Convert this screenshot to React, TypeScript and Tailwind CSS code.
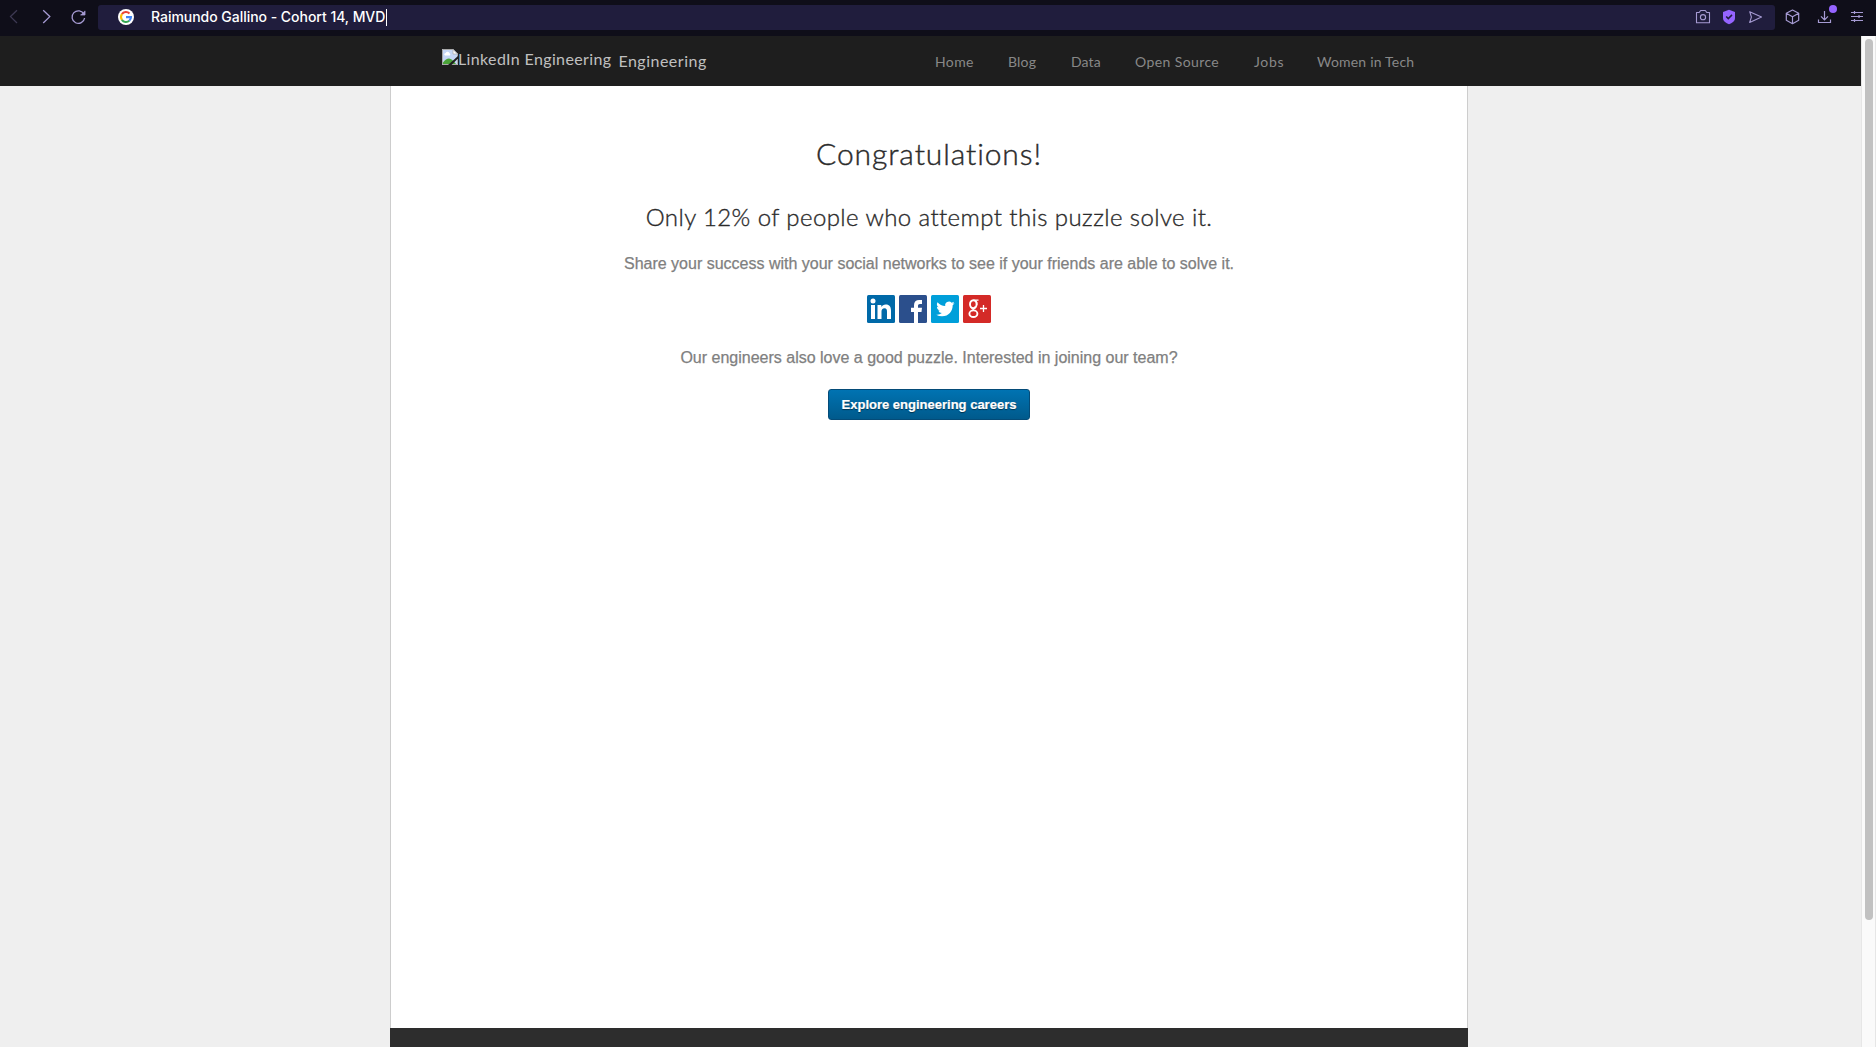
import React from "react";

const navItems = [
  { label: "Home", size: "w-[73px] tracking-[0.4px]" },
  { label: "Blog", size: "w-[63px] tracking-[0.2px]" },
  { label: "Data", size: "w-[64px] tracking-[0.1px]" },
  { label: "Open Source", size: "w-[119px] tracking-[0.4px]" },
  { label: "Jobs", size: "w-[63px] tracking-[0.7px]" },
  { label: "Women in Tech", size: "w-[99px] tracking-[0.2px]" },
];

function GoogleLogo() {
  return (
    <svg width="16" height="16" viewBox="0 0 16 16" className="shrink-0">
      <circle cx="8" cy="8" r="8" fill="#fff" />
      <g fill="none" strokeWidth="2.1">
        <path d="M3.9 5.2A5 5 0 0 1 11.5 4.4" stroke="#ea4335" />
        <path d="M3.9 10.8A5 5 0 0 1 3.9 5.2" stroke="#fbbc05" />
        <path d="M11.3 11.8A5 5 0 0 1 3.9 10.8" stroke="#34a853" />
        <path d="M8 8.1h5A5 5 0 0 1 11.3 11.8" stroke="#4285f4" />
      </g>
    </svg>
  );
}

function BrowserBar() {
  return (
    <div className="flex h-9 shrink-0 items-start bg-[#0f0e19] pt-[5px]">
      <div className="flex h-[25px] w-[98px] shrink-0 items-center">
        <svg width="98" height="25" viewBox="0 0 98 25" fill="none" strokeWidth="1.3">
          <path d="M17 5.2 10.5 11.6 17 18" stroke="#3d3953" />
          <path d="M43.2 5.2 49.8 11.6 43.2 18" stroke="#a69bd3" />
          <path d="M84 9.3A6.3 6.3 0 1 0 84.6 13" stroke="#a69bd3" />
          <path d="M85 5.8V10h-4.6" fill="#a69bd3" stroke="#a69bd3" strokeWidth="0.8" />
        </svg>
      </div>
      <div className="flex h-[25px] w-[1677px] shrink-0 items-center rounded-[3px] bg-[#201d3d] pl-5">
        <div className="-mt-px flex items-center">
          <GoogleLogo />
          <span className="ml-[17px] whitespace-nowrap font-['Inter'] text-[14px] font-medium leading-5 tracking-[-0.03px] text-white">
            Raimundo Gallino - Cohort 14, MVD
          </span>
          <span className="ml-px h-[17px] w-px bg-white" />
        </div>
        <svg className="ml-auto mr-3" width="68" height="25" viewBox="0 0 68 25" fill="none" stroke="#a69bd3" strokeWidth="1.1">
          <path d="M1.5 7.5h2.7l1.5-2h4.6l1.5 2h2.7v10.2h-13z" strokeLinejoin="round" />
          <circle cx="8" cy="12.2" r="2.6" />
          <path d="M34 4.8 40 6.9v6c0 3.2-3 5.1-6 6.3-3-1.2-6-3.1-6-6.3v-6z" fill="#9564ff" stroke="none" />
          <path d="m31.2 11.4 2.1 2.2 3.7-3.7" stroke="#201d3d" strokeWidth="1.5" />
          <path d="M54.7 6.7 66.5 12 54.7 17.4 56.4 12z" strokeLinejoin="round" />
        </svg>
      </div>
      <svg className="-mt-[5px]" width="101" height="36" viewBox="0 0 101 36" fill="none" stroke="#a69bd3" strokeWidth="1.2">
        <path d="m17.5 10 6.2 3.3v7L17.5 23.7l-6.2-3.4v-7zM11.3 13.3l6.2 3.5 6.2-3.5M17.5 16.8v6.9" strokeLinejoin="round" />
        <path d="M49.5 11v8.5M46 16.3l3.5 3.5 3.5-3.5M43.5 19.5v3h12v-3" />
        <circle cx="58" cy="9" r="4" fill="#9564ff" stroke="none" />
        <path d="M76 12.5h12M76 16.5h12M76 20.5h12M79.5 11v3M84 15v3M79.5 19v3" />
      </svg>
    </div>
  );
}

function BrokenImage() {
  return (
    <svg width="16" height="16" viewBox="0 0 16 16" className="shrink-0">
      <path d="M0 0h11l5 5v11H0z" fill="#c5d6f5" />
      <path d="M2.2 5.5a1.6 1.6 0 0 1 1.5-1.6 2 2 0 0 1 3.8.4 1.3 1.3 0 0 1 .3 2.2H3z" fill="#fff" />
      <path d="M1 15v-1.5C3 11 5 9.5 7 9.5s5 3 7 5.5z" fill="#4aa338" />
      <path d="M.5.5h10.3l4.7 4.7v10.3H.5z" fill="none" stroke="#a9a9a9" />
      <path d="M11 .5V5h4.5z" fill="#fff" stroke="#a9a9a9" strokeWidth=".7" />
      <path d="M16 7v2.5L9.5 16H6z" fill="#1e1e1e" />
    </svg>
  );
}

function Header() {
  return (
    <header className="flex h-[50px] shrink-0 bg-[#1e1e1e] font-['Lato']">
      <div className="ml-[442px] flex h-[50px] w-[493px] items-start whitespace-nowrap text-[16px] leading-5 text-[#c0c0c0]">
        <div className="flex pt-[13px]">
          <BrokenImage />
          <span className="tracking-[0.36px]">LinkedIn Engineering</span>
        </div>
        <span className="ml-[7px] pt-[15px] tracking-[0.5px]">Engineering</span>
      </div>
      <nav className="flex pt-[16px] text-[14px] leading-5 text-[#888888]">
        {navItems.map((item) => (
          <a key={item.label} className={`shrink-0 whitespace-nowrap ${item.size}`}>
            {item.label}
          </a>
        ))}
      </nav>
    </header>
  );
}

function SocialIcons() {
  return (
    <div className="mt-[21px] flex gap-1">
      <svg width="28" height="28" viewBox="0 0 28 28">
        <rect width="28" height="28" rx="1.5" fill="#0069a8" />
        <g fill="#fff">
          <circle cx="6" cy="6" r="2.5" />
          <path d="M4 10h4v14H4zM10.5 10h3.8v2c.9-1.5 2.4-2.4 4.4-2.4 4 0 5.3 2.5 5.3 6.2V24h-4v-7.3c0-2-.5-3.5-2.4-3.5-2.2 0-3.1 1.5-3.1 3.5V24h-4z" />
        </g>
      </svg>
      <svg width="28" height="28" viewBox="0 0 28 28">
        <rect width="28" height="28" rx="1.5" fill="#2b4f8c" />
        <path d="M15 28V17h-3v-4.2h3V10.2C15 6.7 17 5 20.2 5H23v4h-2c-1.5 0-2 .7-2 2v1.800h4l-.5 4.200H19v11z" fill="#fff" />
      </svg>
      <svg width="28" height="28" viewBox="0 0 28 28">
        <rect width="28" height="28" rx="1.5" fill="#009fda" />
        <path
          transform="translate(5.3 4.8) scale(.76)"
          d="M23.95 4.57a10 10 0 0 1-2.82.77 4.96 4.96 0 0 0 2.16-2.72 9.9 9.9 0 0 1-3.12 1.18 4.92 4.92 0 0 0-8.38 4.48C7.69 8.1 4.07 6.13 1.64 3.16a4.92 4.92 0 0 0 1.52 6.57 4.9 4.9 0 0 1-2.23-.61v.06a4.92 4.92 0 0 0 3.95 4.83 5 5 0 0 1-2.21.08 4.94 4.94 0 0 0 4.6 3.42A9.87 9.87 0 0 1 0 19.54a14 14 0 0 0 7.55 2.21c9.05 0 14-7.5 14-13.98 0-.21 0-.42-.02-.63a10 10 0 0 0 2.46-2.55z"
          fill="#fff"
        />
      </svg>
      <svg width="28" height="28" viewBox="0 0 28 28" fill="none" stroke="#fff">
        <rect width="28" height="28" rx="1.5" fill="#d42a27" stroke="none" />
        <ellipse cx="10.3" cy="9.3" rx="3.3" ry="4" strokeWidth="1.9" />
        <path d="M10.5 5.2h5M12.5 5.7c1.5 1 1.7 2.300 1.5 4" strokeWidth="1.2" />
        <path d="M12.5 11.8c-1 1.5-2.8 1.7-2.3 3.2" strokeWidth="1.8" />
        <ellipse cx="10.4" cy="18.7" rx="4" ry="3.3" strokeWidth="1.9" />
        <path d="M20.5 10v7M17 13.5h7" strokeWidth="1.3" />
      </svg>
    </div>
  );
}

export default function App() {
  return (
    <div className="flex h-[1047px] w-[1876px] flex-col overflow-hidden bg-[#efefef]">
      <BrowserBar />
      <div className="flex min-h-0 flex-1">
        <div className="flex w-[1861px] flex-col">
          <Header />
          <div className="ml-[390px] flex min-h-0 w-[1078px] flex-1 flex-col">
            <main className="flex h-[942px] flex-col items-center whitespace-nowrap border-x border-[#cdcdcd] bg-white pt-[49px] font-['Liberation_Sans'] text-[16px] leading-5 text-[#808080]">
              <h1 className="font-['Lato'] text-[30px] font-light leading-9 tracking-[0.9px] text-[#2b2b2b] [-webkit-text-stroke:0.4px]">
                Congratulations!
              </h1>
              <h2 className="mt-[31px] font-['Lato'] text-[24px] font-light leading-[30px] tracking-[0.41px] text-[#2b2b2b] [-webkit-text-stroke:0.35px]">
                Only 12% of people who attempt this puzzle solve it.
              </h2>
              <p className="mt-[22px] [-webkit-text-stroke:0.25px]">
                Share your success with your social networks to see if your friends are able to solve it.
              </p>
              <SocialIcons />
              <p className="mt-[25px] [-webkit-text-stroke:0.25px]">
                Our engineers also love a good puzzle. Interested in joining our team?
              </p>
              <button className="mt-[21px] h-[31px] w-[202px] rounded-[3px] border border-[#044b78] bg-linear-to-b from-[#0073b2] to-[#005a8c] text-[13px] font-bold leading-[29px] text-white [text-shadow:0_1px_1px_rgba(0,0,0,0.5)] [-webkit-text-stroke:0.2px]">
                Explore engineering careers
              </button>
            </main>
            <footer className="flex-1 bg-[#2d2d2d]" />
          </div>
        </div>
        <div className="flex w-[15px] justify-center border-x border-[#e6e6e6] bg-[#fafafa] pt-[3px]">
          <div className="h-[881px] w-2 rounded-full bg-[#c1c1c1]" />
        </div>
      </div>
    </div>
  );
}
